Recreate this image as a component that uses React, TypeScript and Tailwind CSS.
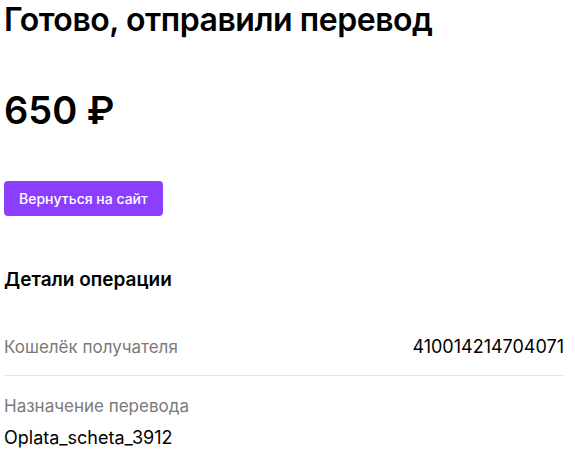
export default function App() {
    return (
        <div className="bg-white w-[575px] h-[454px] overflow-hidden px-1 font-['Inter','Liberation_Sans',sans-serif] text-black">
            <div className="w-[560px]">
                <h1 className="text-[32px] leading-[40px] font-semibold tracking-[-0.45px]">
                    Готово, отправили перевод
                </h1>
                <div className="mt-[45px] text-[38px] leading-[50px] font-semibold">
                    650 ₽
                </div>
                <button className="mt-[46px] h-[35px] px-[15px] rounded-[4px] bg-[#8b3ffd] text-white text-[14px] font-medium">
                    Вернуться на сайт
                </button>
                <h2 className="mt-[50px] text-[19px] leading-[28px] font-semibold">
                    Детали операции
                </h2>
                <div className="mt-[41px] flex justify-between items-center text-[17px] leading-[24px] pb-[16px] border-b border-[#e5e5e5]">
                    <span className="text-[#7a7a7a]">Кошелёк получателя</span>
                    <span className="text-[18px]">410014214704071</span>
                </div>
                <div className="mt-[18px] text-[17px] leading-[24px] text-[#7a7a7a]">
                    Назначение перевода
                </div>
                <div className="mt-[8px] text-[18px] leading-[24px]">
                    Oplata_scheta_3912
                </div>
            </div>
        </div>
    );
}
